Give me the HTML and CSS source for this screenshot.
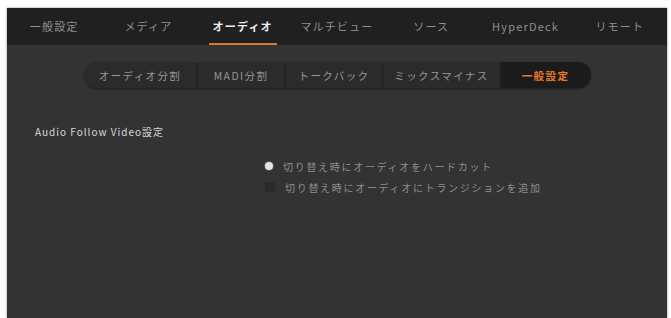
FILE: index.html
```html
<!DOCTYPE html>
<html lang="ja">
<head>
  <meta charset="UTF-8">
  <title>Audio Settings</title>
  <link rel="stylesheet" href="styles.css">
</head>
<body>
  <div class="panel">
    <div class="nav">
      <div class="nav-item">一般設定</div>
      <div class="nav-item">メディア</div>
      <div class="nav-item active">オーディオ</div>
      <div class="nav-item">マルチビュー</div>
      <div class="nav-item">ソース</div>
      <div class="nav-item">HyperDeck</div>
      <div class="nav-item">リモート</div>
    </div>
    <div class="content">
      <div class="tabs">
        <div class="tab t1">オーディオ分割</div>
        <div class="tab t2">MADI分割</div>
        <div class="tab t3">トークバック</div>
        <div class="tab t4">ミックスマイナス</div>
        <div class="tab t5 selected">一般設定</div>
      </div>
      <div class="section-title">Audio Follow Video設定</div>
      <div class="options">
        <div class="option">
          <span class="radio on"></span>
          <span>切り替え時にオーディオをハードカット</span>
        </div>
        <div class="option">
          <span class="radio off"></span>
          <span>切り替え時にオーディオにトランジションを追加</span>
        </div>
      </div>
    </div>
  </div>
</body>
</html>
```

FILE: styles.css
```css
body {
  margin: 0;
  background: #fff;
  font-family: "Noto Sans CJK JP", "Noto Sans", sans-serif;
  height: 318px;
  overflow: hidden;
}

.panel {
  margin: 8px 4px 0 7px;
  height: 310px;
  background: #333;
  box-shadow: 0 0 2px rgba(0, 0, 0, 0.5);
  display: flex;
  flex-direction: column;
}

.nav {
  height: 37px;
  background: #202020;
  display: flex;
  align-items: center;
}

.nav-item {
  flex: 1;
  text-align: center;
  font-size: 11px;
  letter-spacing: 1.2px;
  color: #8f8f8f;
  position: relative;
  height: 37px;
  line-height: 37px;
}

.nav-item.active {
  color: #f0f0f0;
  font-weight: bold;
}

.nav-item.active::after {
  content: '';
  position: absolute;
  left: 13px;
  right: 13px;
  bottom: 0;
  height: 2px;
  background: #d9772b;
}

.content {
  flex: 1;
  padding: 17px 28px 0;
}

.tabs {
  display: flex;
  justify-content: center;
  height: 26px;
}

.tab {
  display: flex;
  align-items: center;
  justify-content: center;
  font-size: 10.5px;
  letter-spacing: 1.4px;
  color: #969696;
  background: #2b2b2b;
  border-left: 1px solid #232323;
  box-shadow: 0 1px 2px rgba(0, 0, 0, 0.4);
}

.t1 { width: 113px; border-left: none; border-radius: 13px 0 0 13px; }
.t2 { width: 87px; }
.t3 { width: 97px; }
.t4 { width: 116px; }
.t5 { width: 90px; border-radius: 0 13px 13px 0; }

.tab.selected {
  background: #1b1b1b;
  color: #e8782a;
  font-weight: bold;
}

.section-title {
  margin-top: 36px;
  font-size: 10px;
  letter-spacing: 1px;
  color: #d8d8d8;
}

.options {
  margin: 20px 0 0 230px;
  display: flex;
  flex-direction: column;
  gap: 7px;
}

.option {
  display: flex;
  align-items: center;
  gap: 10px;
  font-size: 10px;
  letter-spacing: 1.7px;
  color: #8e8e8e;
  height: 14px;
}

.radio {
  width: 8px;
  height: 8px;
  border-radius: 50%;
}

.radio.on {
  background: #e4e4e4;
  box-shadow: 0 0 0 1px #555;
}

.radio.off {
  background: #2a2a2a;
  border-radius: 2px;
  width: 10px;
  height: 10px;
}
```
